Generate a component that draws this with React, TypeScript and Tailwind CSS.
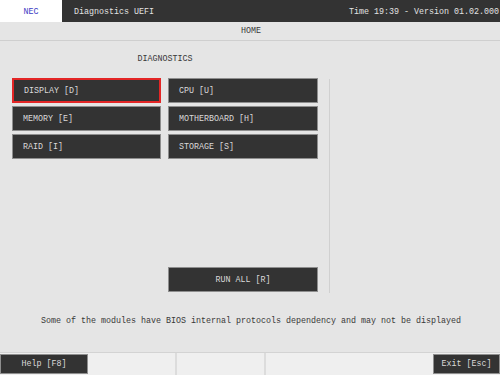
import React from "react";

const modules = [
    { id: 1, title: "DISPLAY [D]", active: true },
    { id: 2, title: "CPU [U]" },
    { id: 3, title: "MEMORY [E]" },
    { id: 4, title: "MOTHERBOARD [H]" },
    { id: 5, title: "RAID [I]" },
    { id: 6, title: "STORAGE [S]" },
];

const App = () => {
    return <div className="w-[500px] h-[375px] flex flex-col bg-[#e5e5e5] text-[#383838] text-[8.33px] leading-[12px] overflow-hidden" style={{ fontFamily: '"Liberation Mono", "DejaVu Sans Mono", monospace' }}>
        {/* top bar */}
        <div className="h-[22px] flex shrink-0">
            <div className="w-[62px] bg-white flex items-center justify-center pt-[1px] text-[#3d3dc4]">NEC</div>
            <div className="flex-1 bg-[#333333] text-[#e2e2e2] flex items-center justify-between pt-[1px] pl-[12px] pr-[1px]">
                <span>Diagnostics UEFI</span>
                <span className="whitespace-nowrap">Time 19:39 - Version 01.02.000</span>
            </div>
        </div>
        <div className="h-[19px] shrink-0 border-b border-[#cfcfcf] flex items-center justify-center pl-[2px]">HOME</div>

        {/* main */}
        <div className="flex-1 flex flex-col">
            <div className="h-[37px] pt-[12px] w-[318px] text-center pl-[12px]">DIAGNOSTICS</div>
            <div className="h-[215px] flex">
                <div className="flex flex-col pl-[12px] w-[318px]">
                    <div className="grid grid-cols-[149px_150px] gap-x-[7px] gap-y-[3px]">
                        {
                            modules.map((data) => (
                                <div key={data.id} className={`h-[25px] bg-[#333333] text-[#dadada] flex items-center pl-[10px] border ${data.active ? "border-[#e32626] border-2 pl-[9px]" : "border-[#8e8e8e]"}`}>
                                    {data.title}
                                </div>
                            ))
                        }
                    </div>
                    <div className="mt-auto mb-[1px] ml-[156px] w-[150px] h-[25px] bg-[#333333] text-[#dadada] border border-[#8e8e8e] flex items-center justify-center">RUN ALL [R]</div>
                </div>
                <div className="ml-[11px] mt-[1px] border-l border-[#d0d0d0]" />
            </div>
            <div className="flex-1 pt-[22px] text-center pl-[2px]">Some of the modules have BIOS internal protocols dependency and may not be displayed</div>
        </div>

        {/* footer */}
        <div className="h-[23px] shrink-0 border-t border-[#d3d3d3] bg-[#efefef] flex items-stretch">
            <div className="w-[88px] my-[1px] bg-[#333333] text-[#dadada] border border-[#8e8e8e] flex items-center justify-center">Help [F8]</div>
            <div className="w-[89px] border-r-2 border-[#dcdcdc]" />
            <div className="w-[89px] border-r-2 border-[#dcdcdc]" />
            <div className="flex-1" />
            <div className="w-[67px] my-[1px] bg-[#333333] text-[#dadada] border border-[#8e8e8e] flex items-center justify-center">Exit [Esc]</div>
        </div>
    </div>;
};

export default App;
